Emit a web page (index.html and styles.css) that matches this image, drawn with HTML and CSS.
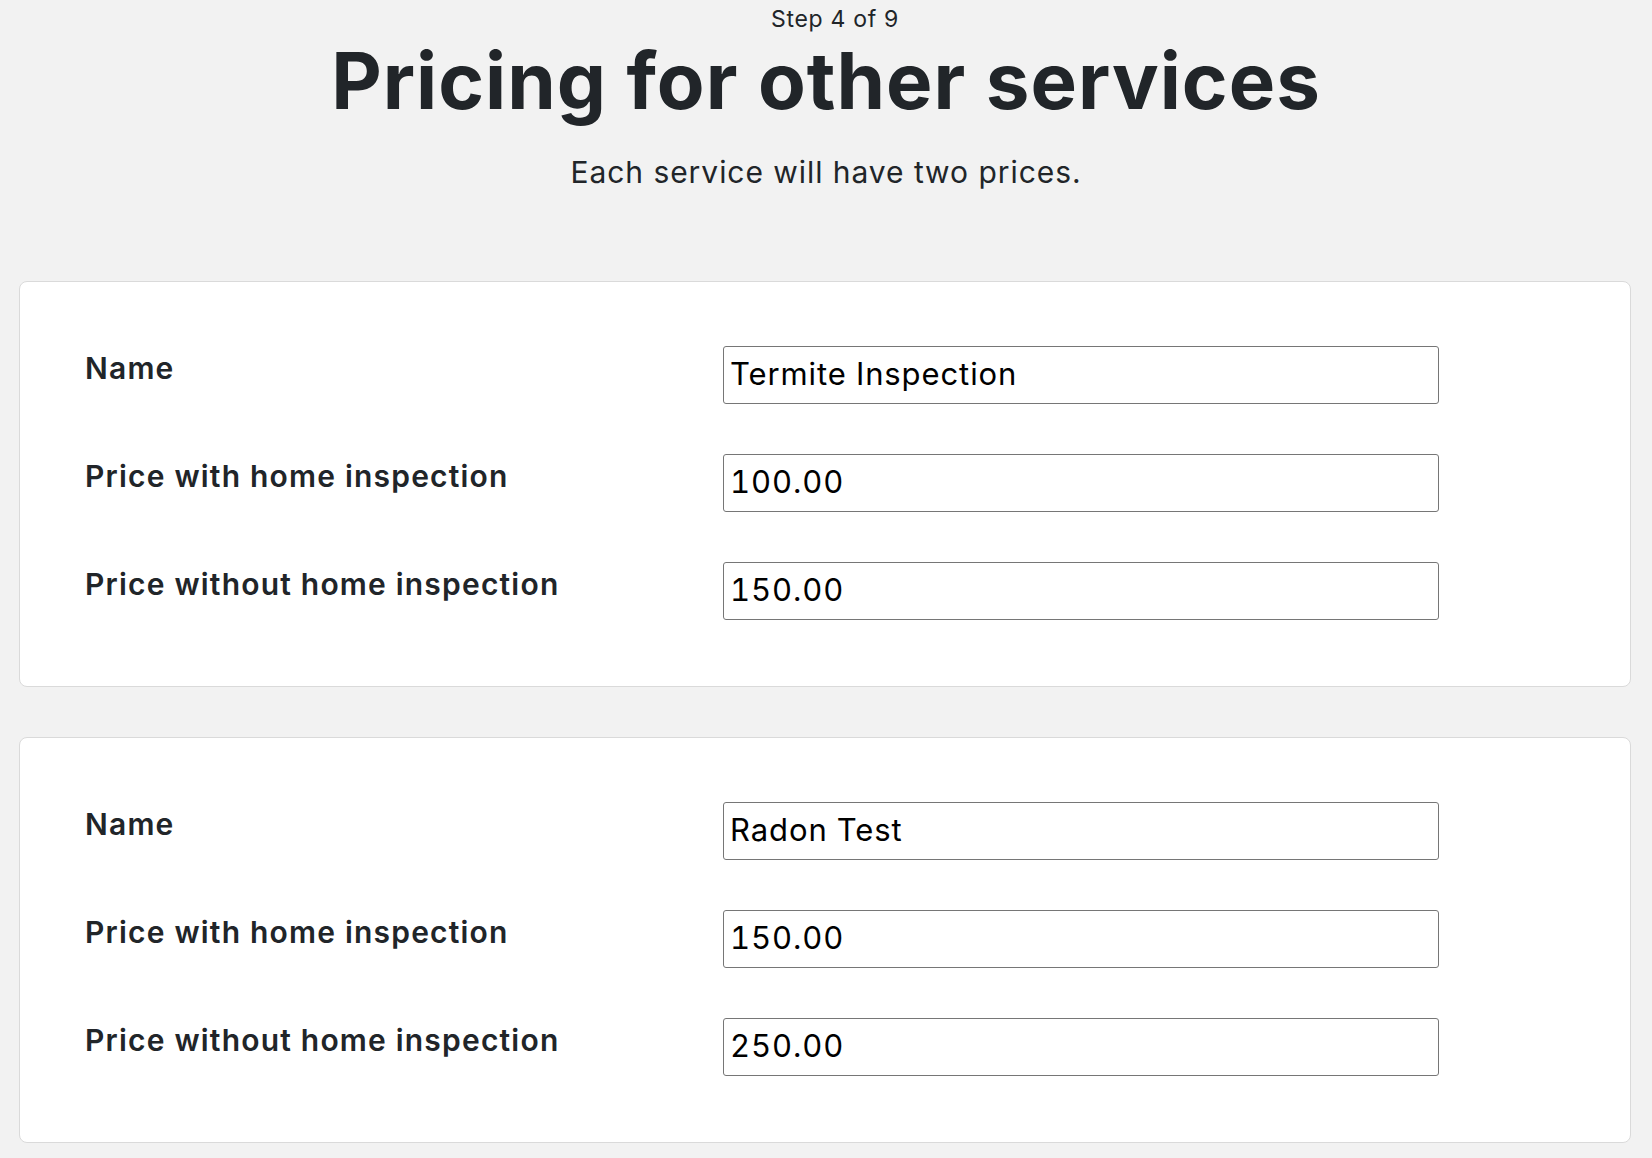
FILE: index.html
```html
<!DOCTYPE html>
<html lang="en">
<head>
<meta charset="utf-8">
<title>Pricing for other services</title>
<link rel="stylesheet" href="styles.css">
</head>
<body>
<header class="header">
  <div class="step">Step 4 of 9</div>
  <h1 class="title">Pricing for other services</h1>
  <p class="subtitle">Each service will have two prices.</p>
</header>
<main class="services">
  <section class="card">
    <div class="field">
      <label class="label" for="s1-name">Name</label>
      <input class="input" id="s1-name" type="text" value="Termite Inspection">
    </div>
    <div class="field">
      <label class="label" for="s1-with">Price with home inspection</label>
      <input class="input" id="s1-with" type="text" value="100.00">
    </div>
    <div class="field">
      <label class="label" for="s1-without">Price without home inspection</label>
      <input class="input" id="s1-without" type="text" value="150.00">
    </div>
  </section>
  <section class="card">
    <div class="field">
      <label class="label" for="s2-name">Name</label>
      <input class="input" id="s2-name" type="text" value="Radon Test">
    </div>
    <div class="field">
      <label class="label" for="s2-with">Price with home inspection</label>
      <input class="input" id="s2-with" type="text" value="150.00">
    </div>
    <div class="field">
      <label class="label" for="s2-without">Price without home inspection</label>
      <input class="input" id="s2-without" type="text" value="250.00">
    </div>
  </section>
</main>
</body>
</html>
```
FILE: styles.css
```css
html, body {
  margin: 0;
  padding: 0;
}
body {
  background: #f2f2f2;
  color: #212529;
  font-family: Inter, "Noto Sans", sans-serif;
}
.header {
  text-align: center;
  padding-top: 8px;
}
.step {
  margin-left: 18px;
  font-size: 23px;
  line-height: 23px;
  letter-spacing: 0.7px;
}
.title {
  margin: 11px 0 0 0;
  font-size: 78px;
  line-height: 78px;
  font-weight: 700;
  letter-spacing: 1px;
}
.subtitle {
  margin: 34px 0 0 0;
  font-size: 30px;
  line-height: 36px;
  letter-spacing: 0.95px;
}
.services {
  display: flex;
  flex-direction: column;
  gap: 50px;
  margin: 91px 21px 0 19px;
}
.card {
  background: #ffffff;
  border: 1px solid #dadada;
  border-radius: 8px;
  padding: 64px 65px 66px 65px;
  display: flex;
  flex-direction: column;
  gap: 50px;
}
.field {
  display: flex;
  align-items: flex-start;
}
.label {
  width: 638px;
  flex: none;
  padding-top: 1px;
  font-size: 30px;
  line-height: 42px;
  font-weight: 600;
  letter-spacing: 1.2px;
}
.input {
  box-sizing: border-box;
  width: 716px;
  height: 58px;
  margin: 0;
  padding: 0 6px 3px 6px;
  border: 1px solid #767676;
  border-radius: 3px;
  background: #fff;
  color: #000;
  font-family: Inter, "Noto Sans", sans-serif;
  font-size: 31px;
  letter-spacing: 0.9px;
  font-feature-settings: "tnum";
  outline: none;
}
```
